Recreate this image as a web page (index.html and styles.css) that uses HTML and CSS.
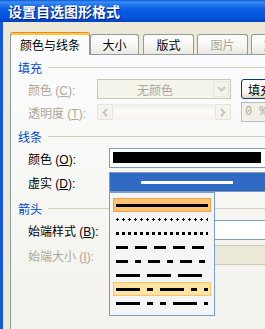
FILE: index.html
```html
<!DOCTYPE html>
<html>
<head>
<meta charset="utf-8">
<link rel="stylesheet" href="styles.css">
</head>
<body>
<div class="window">
  <div class="titlebar"><span class="title">设置自选图形格式</span></div>
  <div class="client">
    <div class="tabs">
      <div class="tab active t1">颜色与线条</div>
      <div class="tab t2">大小</div>
      <div class="tab t3">版式</div>
      <div class="tab t4 off">图片</div>
      <div class="tab t5">文本框</div>
    </div>
    <div class="panel">
      <div class="group"><span class="group-title">填充</span><span class="rule"></span></div>

      <div class="row gap5">
        <span class="label off">颜色 (<u>C</u>):</span>
        <div class="combo combo-fill">
          <span class="combo-text">无颜色</span>
          <span class="combo-btn">
            <svg width="9" height="6" viewBox="0 0 9 6"><polyline points="1,1 4.5,4.5 8,1" fill="none" stroke="#C9C7BA" stroke-width="2"/></svg>
          </span>
        </div>
        <div class="btn-fill">填充效果(<u>F</u>)...</div>
      </div>

      <div class="row gap3">
        <span class="label off">透明度 (<u>T</u>):</span>
        <div class="scroll">
          <span class="sb-btn">
            <svg width="6" height="9" viewBox="0 0 6 9"><polyline points="5,1 1.5,4.5 5,8" fill="none" stroke="#C9C7BA" stroke-width="2"/></svg>
          </span>
          <span class="sb-track"></span>
          <span class="sb-btn">
            <svg width="6" height="9" viewBox="0 0 6 9"><polyline points="1,1 4.5,4.5 1,8" fill="none" stroke="#C9C7BA" stroke-width="2"/></svg>
          </span>
        </div>
        <div class="textbox">0 %</div>
      </div>

      <div class="group gap7"><span class="group-title">线条</span><span class="rule"></span></div>

      <div class="row gap5">
        <span class="label wide">颜色 (<u>O</u>):</span>
        <div class="combo combo-line"><span class="color-bar"></span></div>
      </div>

      <div class="row gap4">
        <span class="label wide">虚实 (<u>D</u>):</span>
        <div class="combo combo-dash">
          <svg class="dash-sel" width="92" height="3" viewBox="0 0 92 3"><rect x="0" y="0" width="92" height="3" fill="#fff"/></svg>
          <div class="popup">
            <div class="item sel"><svg width="92" height="3" viewBox="0 0 92 3"><line x1="0" y1="1.5" x2="92" y2="1.5" stroke="#000" stroke-width="3"/></svg></div>
            <div class="item"><svg width="92" height="3" viewBox="0 0 92 3"><line x1="0" y1="1.5" x2="92" y2="1.5" stroke="#000" stroke-width="1" stroke-dasharray="3 3"/><line x1="0" y1="1.5" x2="92" y2="1.5" stroke="#000" stroke-width="3" stroke-dasharray="1 5" stroke-dashoffset="5"/></svg></div>
            <div class="item"><svg width="92" height="3" viewBox="0 0 92 3"><line x1="0" y1="1.5" x2="92" y2="1.5" stroke="#000" stroke-width="3" stroke-dasharray="3 3"/></svg></div>
            <div class="item"><svg width="92" height="3" viewBox="0 0 92 3"><line x1="0" y1="1.5" x2="92" y2="1.5" stroke="#000" stroke-width="3" stroke-dasharray="12 7"/></svg></div>
            <div class="item"><svg width="92" height="3" viewBox="0 0 92 3"><line x1="0" y1="1.5" x2="92" y2="1.5" stroke="#000" stroke-width="3" stroke-dasharray="12 7 6 7"/></svg></div>
            <div class="item"><svg width="92" height="3" viewBox="0 0 92 3"><line x1="0" y1="1.5" x2="92" y2="1.5" stroke="#000" stroke-width="3" stroke-dasharray="24 7"/></svg></div>
            <div class="item hot"><svg width="92" height="3" viewBox="0 0 92 3"><line x1="0" y1="1.5" x2="92" y2="1.5" stroke="#000" stroke-width="3" stroke-dasharray="24 7 6 7"/></svg></div>
            <div class="item"><svg width="92" height="3" viewBox="0 0 92 3"><line x1="0" y1="1.5" x2="92" y2="1.5" stroke="#000" stroke-width="3" stroke-dasharray="24 7 6 7 6 7"/></svg></div>
          </div>
        </div>
      </div>

      <div class="group gap9"><span class="group-title">箭头</span><span class="rule"></span></div>

      <div class="row gap5">
        <span class="label wide">始端样式 (<u>B</u>):</span>
        <div class="combo combo-line"></div>
      </div>

      <div class="row gap5">
        <span class="label wide off">始端大小 (<u>I</u>):</span>
        <div class="combo combo-line combo-off"></div>
      </div>
    </div>
  </div>
</div>
</body>
</html>
```

FILE: styles.css
```css
html, body {
  margin: 0;
  padding: 0;
}
body {
  background: #ECE9D8;
  font-family: "Liberation Sans", "Noto Sans CJK SC", sans-serif;
  font-size: 12px;
  color: #000;
  overflow: hidden;
}
u { text-decoration: underline; }

.window {
  width: 420px;
}

.titlebar {
  height: 22px;
  display: flex;
  align-items: center;
  padding-left: 8px;
  background: linear-gradient(to bottom,
    #0A5BD8 0px, #3C8EF3 2px, #2B7BEE 4px, #0F64E4 8px,
    #0558E0 12px, #0554DD 17px, #034AD0 20px, #0240C0 22px);
}
.title {
  color: #fff;
  font-family: "Noto Sans CJK SC", sans-serif;
  font-weight: bold;
  font-size: 14px;
  line-height: 14px;
  text-shadow: 1px 1px 0 #0A1A8A;
}

.client {
  border-left: 3px solid #1458DF;
  padding: 10px 0 0 7px;
  height: 307px;
  box-sizing: border-box;
}

.tabs {
  display: flex;
  align-items: flex-end;
  height: 22px;
  position: relative;
  z-index: 1;
}
.tab {
  box-sizing: border-box;
  height: 20px;
  flex: none;
  border: 1px solid #919B9C;
  border-bottom: none;
  border-radius: 3px 3px 0 0;
  background: linear-gradient(#FFFFFF, #F7F7F4 55%, #E8E7E0);
  display: flex;
  align-items: center;
  justify-content: center;
  white-space: nowrap;
  overflow: hidden;
}
.tab.active {
  height: 23px;
  margin-bottom: -1px;
  background: #FCFCFE;
  border-top: 1px solid #E68B2C;
  box-shadow: inset 0 2px 0 #FFC73C;
  padding-top: 1px;
}
.tab.off { color: #ACA899; }
.t1 { width: 80px; }
.t2 { width: 49px; margin-right: 4px; }
.t3 { width: 51px; margin-right: 3px; }
.t4 { width: 51px; margin-right: 3px; }
.t5 { width: 60px; justify-content: flex-start; padding-left: 12px; }

.panel {
  box-sizing: border-box;
  height: 300px;
  border: 1px solid #919B9C;
  background: linear-gradient(#FCFCFE, #F8F8F5 40%, #F4F3EE 75%);
  padding-top: 5px;
}

.group {
  display: flex;
  align-items: center;
  height: 14px;
  padding-left: 7px;
  color: #0046D5;
}
.rule {
  flex: 1;
  height: 1px;
  background: #D0D0BF;
  margin-left: 6px;
}

.gap3 { margin-top: 3px; }
.gap4 { margin-top: 4px; }
.gap5 { margin-top: 5px; }
.gap7 { margin-top: 7px; }
.gap9 { margin-top: 9px; }

.row {
  display: flex;
  align-items: center;
  height: 20px;
  padding-left: 17px;
}
.label {
  width: 69px;
  flex: none;
  white-space: nowrap;
}
.label.wide { width: 81px; }
.label.off { color: #ACA899; }

.combo {
  box-sizing: border-box;
  height: 20px;
  flex: none;
  border: 1px solid #7F9DB9;
  background: #fff;
  display: flex;
  position: relative;
}
.combo-fill {
  width: 134px;
  border-color: #C9C7BA;
  background: #F5F4EA;
  align-items: center;
}
.combo-text {
  flex: 1;
  text-align: center;
  color: #ACA899;
}
.combo-btn {
  box-sizing: border-box;
  width: 16px;
  height: 16px;
  margin: 0 1px;
  border: 1px solid #E6E5DC;
  border-radius: 2px;
  background: #F4F3EE;
  display: flex;
  align-items: center;
  justify-content: center;
}

.btn-fill {
  box-sizing: border-box;
  flex: none;
  width: 90px;
  height: 20px;
  margin-left: 10px;
  border: 1px solid #003C74;
  border-radius: 3px;
  background: linear-gradient(#FFFFFF, #F4F4F0 70%, #DCD8CC);
  display: flex;
  align-items: center;
  padding-left: 6px;
  white-space: nowrap;
}

.scroll {
  flex: none;
  width: 134px;
  height: 16px;
  display: flex;
  background: linear-gradient(#EEEDE6, #FBFBF8 45%, #F6F5F0);
}
.sb-track { flex: 1; }
.sb-btn {
  box-sizing: border-box;
  width: 16px;
  height: 16px;
  border: 1px solid #E6E5DC;
  border-radius: 2px;
  background: #F5F4EF;
  display: flex;
  align-items: center;
  justify-content: center;
}

.textbox {
  box-sizing: border-box;
  flex: none;
  width: 40px;
  height: 20px;
  margin-left: 10px;
  border: 1px solid #B5BCC2;
  background: #F2F1E9;
  color: #ACA899;
  padding-left: 3px;
  display: flex;
  align-items: center;
  font-family: "Liberation Mono", monospace;
}

.combo-line {
  width: 220px;
  align-items: flex-start;
}
.color-bar {
  width: 148px;
  height: 11px;
  margin: 3px 0 0 3px;
  background: #000;
}
.combo-off {
  background: #ECE9D8;
  border-color: #C9C7BA;
}

.combo-dash {
  width: 220px;
  background: #316AC5;
  align-items: flex-start;
}
.dash-sel {
  display: block;
  margin: 8px 0 0 31px;
}

.popup {
  position: absolute;
  left: -1px;
  top: calc(100% + 1px);
  width: 106px;
  height: 124px;
  box-sizing: border-box;
  border: 1px solid #7A9CD6;
  background: #F5F5F5;
  padding: 5px 3px;
  z-index: 5;
}
.item {
  box-sizing: border-box;
  height: 14px;
  border: 1px solid transparent;
  padding: 5px 2px 0;
}
.item svg { display: block; }
.item.sel {
  background: #FFC373;
  border-color: #F2A445;
}
.item.hot {
  background: #FFE5A3;
  border-color: #FFC266;
}
```
